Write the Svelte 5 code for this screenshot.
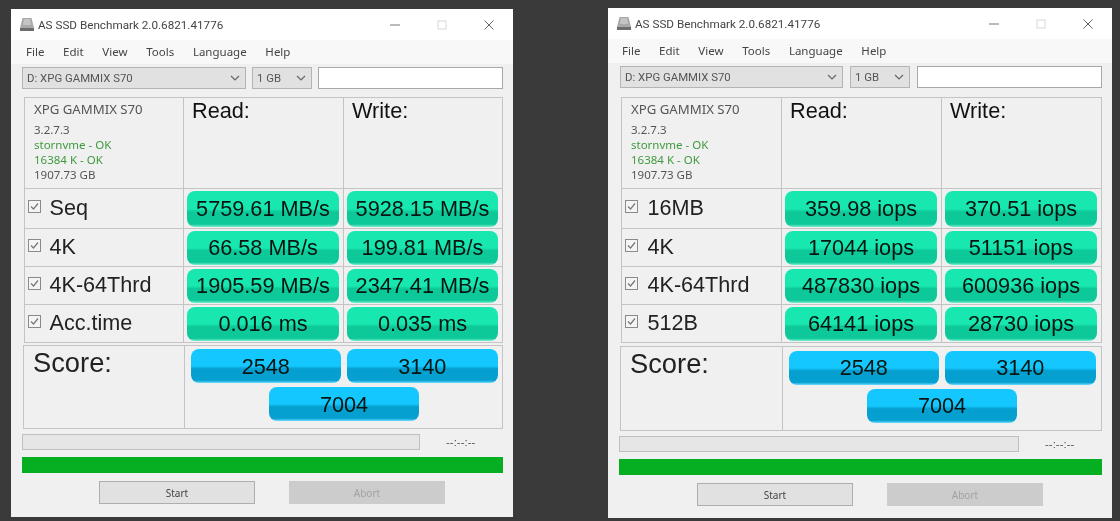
<script>
  const windows = [
    {
      name: 'left',
      rows: [
        { label: 'Seq', read: '5759.61 MB/s', write: '5928.15 MB/s' },
        { label: '4K', read: '66.58 MB/s', write: '199.81 MB/s' },
        { label: '4K-64Thrd', read: '1905.59 MB/s', write: '2347.41 MB/s' },
        { label: 'Acc.time', read: '0.016 ms', write: '0.035 ms' }
      ]
    },
    {
      name: 'right',
      rows: [
        { label: '16MB', read: '359.98 iops', write: '370.51 iops' },
        { label: '4K', read: '17044 iops', write: '51151 iops' },
        { label: '4K-64Thrd', read: '487830 iops', write: '600936 iops' },
        { label: '512B', read: '64141 iops', write: '28730 iops' }
      ]
    }
  ];
  const menu = ['File', 'Edit', 'View', 'Tools', 'Language', 'Help'];
</script>

{#snippet chevron()}
  <svg class="chevron" viewBox="0 0 10 6" width="10" height="6">
    <path d="M1 1l4 4 4-4" fill="none" stroke="#666" stroke-width="1.2" />
  </svg>
{/snippet}

<main class="desktop">
  {#each windows as win}
    <section class="window {win.name}">
      <header class="titlebar">
        <svg class="app-icon" viewBox="0 0 16 15" width="16" height="15">
          <path d="M3.5 1h9l2.5 10H1z" fill="#a9a9a9" />
          <path d="M5 2h6l1 6H4z" fill="#c4c4c4" />
          <rect x="1" y="11" width="14" height="3" fill="#6d6d6d" />
        </svg>
        <span class="title">AS SSD Benchmark 2.0.6821.41776</span>
        <div class="controls">
          <svg viewBox="0 0 10 10" width="10" height="10"><path d="M0 5h10" stroke="#777" stroke-width="1" /></svg>
          <svg viewBox="0 0 10 10" width="10" height="10"><rect x="1" y="1" width="8" height="8" fill="none" stroke="#d8d8d8" /></svg>
          <svg viewBox="0 0 10 10" width="10" height="10"><path d="M0.5 0.5l9 9M9.5 0.5l-9 9" stroke="#666" stroke-width="1" /></svg>
        </div>
      </header>

      <nav class="menu">
        {#each menu as item}<span>{item}</span>{/each}
      </nav>

      <div class="toolbar">
        <div class="combo drive"><span>D: XPG GAMMIX S70</span>{@render chevron()}</div>
        <div class="combo size"><span>1 GB</span>{@render chevron()}</div>
        <div class="textbox"></div>
      </div>

      <div class="table">
        <div class="cell info">
          <div class="model">XPG GAMMIX S70</div>
          <div class="version">3.2.7.3</div>
          <div class="ok">stornvme - OK</div>
          <div class="ok">16384 K - OK</div>
          <div class="capacity">1907.73 GB</div>
        </div>
        <div class="cell heading">Read:</div>
        <div class="cell heading">Write:</div>

        {#each win.rows as row}
          <div class="cell label">
            <svg class="check" viewBox="0 0 13 13" width="13" height="13">
              <rect x="0.5" y="0.5" width="12" height="12" fill="#f4f4f4" stroke="#8a8a8a" />
              <path d="M3 6.5l2.5 2.5L10 3.5" fill="none" stroke="#777" stroke-width="1.2" />
            </svg>
            <span>{row.label}</span>
          </div>
          <div class="cell value"><div class="bar green">{row.read}</div></div>
          <div class="cell value"><div class="bar green">{row.write}</div></div>
        {/each}
      </div>

      <div class="score">
        <div class="cell score-title">Score:</div>
        <div class="cell score-bars">
          <div class="bar blue">2548</div>
          <div class="bar blue">3140</div>
          <div class="bar blue">7004</div>
        </div>
      </div>

      <div class="progress-row">
        <div class="progress"></div>
        <span class="time">--:--:--</span>
      </div>
      <div class="total"></div>

      <div class="buttons">
        <div class="button">Start</div>
        <div class="button off">Abort</div>
      </div>
    </section>
  {/each}
</main>

<style>
  :global(body) {
    background: #3a3a3a;
  }

  .desktop {
    display: flex;
    height: 521px;
    overflow: hidden;
    background: #3a3a3a;
    font-family: "Liberation Sans", Arial, sans-serif;
    color: #111;
  }

  .window {
    display: flex;
    flex-direction: column;
    box-sizing: border-box;
    background: #f0f0f0;
    filter: blur(0.5px);
  }
  .window.left {
    width: 502px;
    height: 508px;
    margin: 9px 0 0 11px;
    --first-col: 159px;
    --score-col: 161px;
    --table-top: 8px;
    --score-h: 83px;
    --score-gap: 2px;
    --progress-w: 398px;
    --combo-left: 11px;
    --combo-gap: 6px;
    --buttons-left: 88px;
    --bars-top: 3px;
    --bars-left: 1px;
    --score-text-top: 1px;
    --label-gap: 8.5px;
    --blue-text: 1px;
  }
  .window.right {
    width: 504px;
    height: 510px;
    margin: 8px 0 0 95px;
    --first-col: 160px;
    --score-col: 162px;
    --table-top: 9px;
    --score-h: 84px;
    --score-gap: 3px;
    --progress-w: 400px;
    --combo-left: 12px;
    --combo-gap: 7px;
    --buttons-left: 89px;
    --bars-top: 4px;
    --bars-left: 0px;
    --score-text-top: 1px;
    --label-gap: 9.5px;
    --blue-text: 0px;
  }

  .titlebar {
    display: flex;
    align-items: center;
    height: 31px;
    padding: 0 0 0 8px;
    background: #fff;
  }
  .app-icon {
    margin-right: 3px;
  }
  .title {
    font-family: Roboto, sans-serif;
    font-size: 11.7px;
    color: #444;
  }
  .controls {
    display: flex;
    gap: 37px;
    margin-left: auto;
    margin-right: 19px;
  }

  .menu {
    display: flex;
    gap: 18.7px;
    align-items: center;
    height: 23px;
    padding: 0 0 1px 15px;
    background: #f8f8f8;
    font-family: "Noto Sans", sans-serif;
    font-size: 11.5px;
    color: #444;
  }
  .right .menu {
    padding-left: 14px;
  }

  .toolbar {
    display: flex;
    gap: var(--combo-gap);
    height: 22px;
    margin: 3px 10px 0 var(--combo-left);
  }
  .combo {
    display: flex;
    align-items: center;
    justify-content: space-between;
    box-sizing: border-box;
    padding: 0 5px 0 4px;
    background: #e1e1e1;
    border: 1px solid #b4b4b4;
    font-family: Roboto, sans-serif;
    font-size: 11.4px;
    color: #555;
  }
  .drive {
    width: 224px;
  }
  .right .drive {
    width: 223px;
  }
  .size {
    width: 60px;
  }
  .textbox {
    flex: 1;
    background: #fff;
    border: 1px solid #a8a8a8;
  }

  .table {
    display: grid;
    grid-template-columns: var(--first-col) 160px 1fr;
    grid-template-rows: 91px 40px repeat(3, 38px);
    margin: var(--table-top) 10px 0 13px;
    border-top: 1px solid #c4c4c4;
    border-right: 1px solid #c4c4c4;
    border-left: 1px solid #c4c4c4;
  }
  .cell {
    box-sizing: border-box;
    border-bottom: 1px solid #c4c4c4;
    border-right: 1px solid #c4c4c4;
  }
  .table .cell:nth-child(3n) {
    border-right: 0;
  }

  .info {
    padding: 2px 0 0 9px;
    font-family: "Noto Sans", sans-serif;
    font-size: 11.5px;
    line-height: 15px;
    color: #555;
  }
  .model {
    font-size: 13.2px;
    line-height: 18px;
    margin-bottom: 4px;
  }
  .ok {
    color: #3f9a3f;
  }
  .heading {
    padding: 0 0 0 8px;
    font-size: 21.7px;
    line-height: 26px;
  }

  .label {
    display: flex;
    align-items: center;
    gap: var(--label-gap);
    padding-left: 3px;
    font-size: 21.6px;
    color: #222;
  }
  .label span {
    position: relative;
    top: -1px;
  }
  .check {
    position: relative;
    top: -2px;
  }

  .value {
    padding: 2px 4px 1px 3px;
    display: flex;
  }
  .bar {
    display: flex;
    align-items: center;
    justify-content: center;
    box-sizing: border-box;
    border-radius: 8px;
    font-size: 21.7px;
    color: #07140f;
  }
  .bar.green {
    flex: 1;
    background: linear-gradient(#18e8b0 0 50%, #0dc898 58% 92%, #7cf0d0 100%);
  }
  .bar.blue {
    width: 150.5px;
    height: 34px;
    padding-top: var(--blue-text);
    background: linear-gradient(#14c8ff 0 50%, #05a0d0 58% 92%, #6ddcff 100%);
  }

  .score {
    display: grid;
    grid-template-columns: var(--score-col) 1fr;
    height: var(--score-h);
    margin: var(--score-gap) 10px 0 12px;
    border: 1px solid #c4c4c4;
    border-bottom-width: 0;
  }
  .score .cell:last-child {
    border-right: 0;
  }
  .score-title {
    padding: var(--score-text-top) 0 0 9px;
    font-size: 27.3px;
    line-height: 32px;
    color: #222;
  }
  .score-bars {
    display: flex;
    flex-wrap: wrap;
    justify-content: center;
    align-content: flex-start;
    gap: 4px 6px;
    padding: var(--bars-top) 0 0 var(--bars-left);
  }

  .progress-row {
    display: flex;
    align-items: center;
    margin: 5px 0 0 11px;
  }
  .progress {
    width: var(--progress-w);
    height: 16px;
    box-sizing: border-box;
    background: #e6e6e6;
    border: 1px solid #bfbfbf;
  }
  .time {
    margin-left: 26px;
    font-size: 11.5px;
    color: #555;
  }

  .total {
    height: 16px;
    margin: 7px 10px 0 11px;
    background: #06ae22;
  }

  .buttons {
    display: flex;
    gap: 34px;
    margin: 8px 0 0 var(--buttons-left);
  }
  .button {
    display: flex;
    align-items: center;
    justify-content: center;
    box-sizing: border-box;
    width: 156px;
    height: 23px;
    background: #e1e1e1;
    border: 1px solid #aeaeae;
    font-family: "Noto Sans", sans-serif;
    font-size: 10px;
    color: #444;
  }
  .button.off {
    background: #cccccc;
    border-color: #cccccc;
    color: #a2a2a2;
  }
</style>
